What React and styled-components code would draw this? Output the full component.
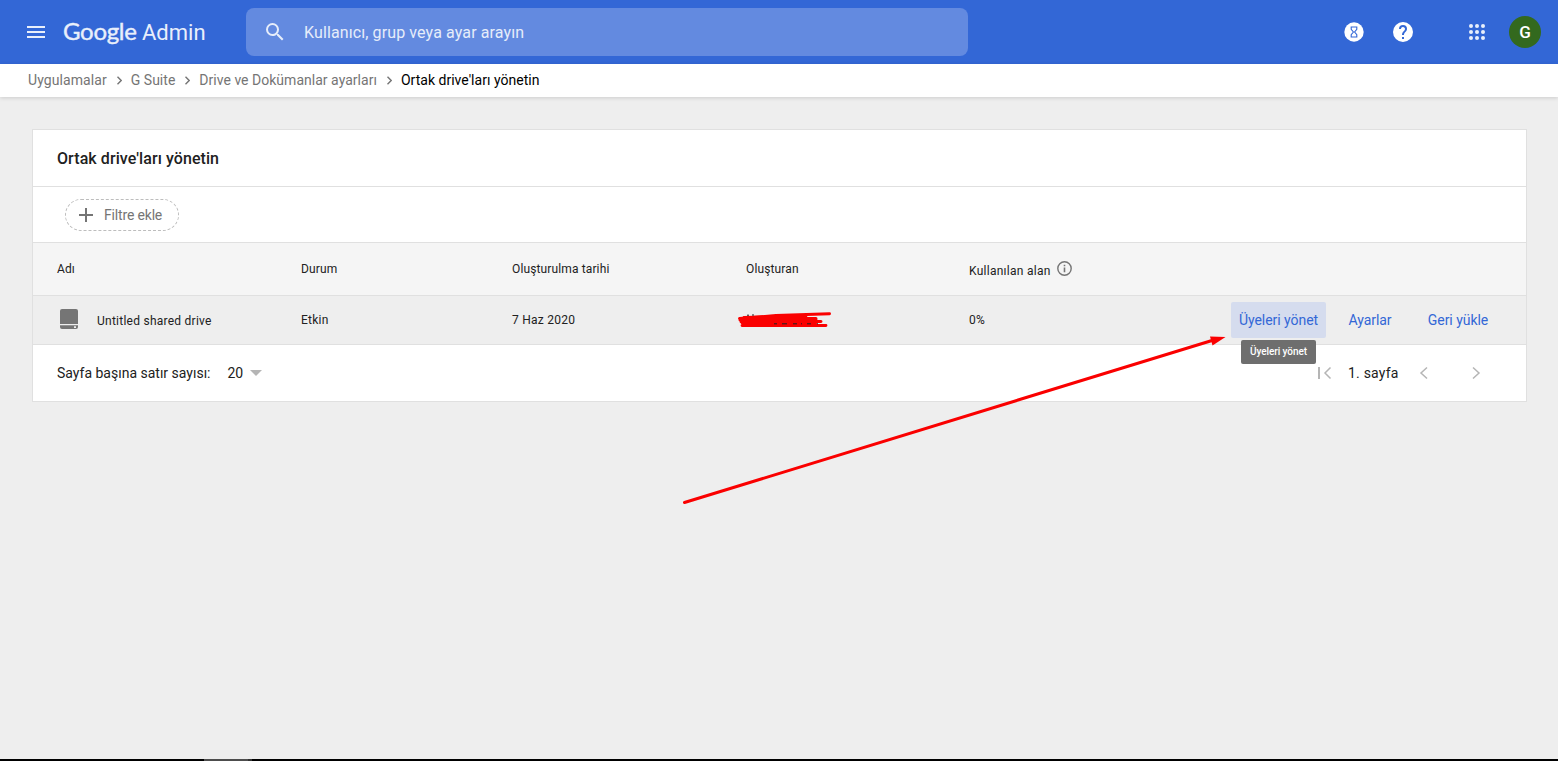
import React, { useState } from 'react';
import styled, { createGlobalStyle } from 'styled-components';

const GlobalStyle = createGlobalStyle`
    * {
        box-sizing: border-box;
    }

    body {
        margin: 0;
        background: #eee;
        font-family: Roboto, "Liberation Sans", sans-serif;
        color: #212121;
    }

    svg {
        display: block;
        flex-shrink: 0;
    }
`;

const Page = styled.div`
    position: relative;
    display: flex;
    flex-direction: column;
    height: 100vh;
    overflow: hidden;
`;

const Header = styled.header`
    display: flex;
    align-items: center;
    height: 64px;
    flex-shrink: 0;
    padding: 0 17px 0 24px;
    background: #3367d6;
    color: #fff;
`;

const Brand = styled.div`
    display: flex;
    align-items: baseline;
    width: 183px;
    margin: 0 0 0 15px;
    line-height: 32px;
    color: #e9effb;
    white-space: nowrap;

    .google {
        width: 79px;
        font-family: Lato, sans-serif;
        font-size: 24px;
        letter-spacing: -0.3px;
        -webkit-text-stroke: 0.4px #e9effb;
    }

    .admin {
        font-size: 22px;
        letter-spacing: 0;
    }
`;

const Search = styled.div`
    display: flex;
    align-items: center;
    gap: 17px;
    width: 722px;
    height: 48px;
    padding-left: 17px;
    border-radius: 8px;
    background: #638ae0;
    color: #e6edfa;
    font-size: 16px;
    letter-spacing: 0.11px;
`;

const HeaderActions = styled.div`
    display: flex;
    align-items: center;
    margin-left: auto;

    svg:nth-child(2) {
        margin: 0 54px 0 25px;
    }
`;

const Avatar = styled.div`
    display: flex;
    align-items: center;
    justify-content: center;
    width: 32px;
    height: 32px;
    margin-left: 24px;
    border-radius: 50%;
    background: #33691e;
    font-size: 17px;
    font-weight: 500;
`;

const Breadcrumbs = styled.nav`
    display: flex;
    align-items: center;
    height: 33px;
    flex-shrink: 0;
    padding: 0 0 1px 28px;
    background: #fff;
    box-shadow: 0 1px 4px rgba(0, 0, 0, 0.14);
    font-size: 14px;
    z-index: 1;

    svg {
        margin: 0 9px 0 10px;
    }
`;

const Crumb = styled.span`
    color: ${(p) => (p.$current ? '#000' : '#757575')};
    letter-spacing: 0.02px;
    white-space: nowrap;

    &:first-child {
        letter-spacing: 0.08px;
    }
`;

const Panel = styled.main`
    width: 1495px;
    margin: 32px 0 0 32px;
    border: 1px solid #e0e0e0;
    background: #fff;
`;

const Title = styled.h1`
    display: flex;
    align-items: center;
    height: 57px;
    margin: 0;
    padding: 0 24px;
    border-bottom: 1px solid #e0e0e0;
    font-size: 16px;
    font-weight: 500;
    letter-spacing: 0.08px;
`;

const FilterBar = styled.div`
    display: flex;
    align-items: center;
    height: 56px;
    padding-left: 32px;
    border-bottom: 1px solid #e0e0e0;
`;

const FilterChip = styled.button`
    display: flex;
    align-items: center;
    gap: 11px;
    width: 114px;
    height: 32px;
    padding: 0 0 0 13px;
    border: 1px dashed #bdbdbd;
    border-radius: 16px;
    background: none;
    color: #757575;
    font-family: inherit;
    font-size: 14px;
    letter-spacing: -0.17px;
    white-space: nowrap;
`;

const Row = styled.div`
    display: grid;
    grid-template-columns: 244px 211px 234px 223px 1fr auto;
    align-items: center;
    height: ${(p) => (p.$head ? '53px' : '49px')};
    padding: 0 30px 0 24px;
    border-bottom: 1px solid #e0e0e0;
    background: ${(p) => (p.$head ? '#f5f5f5' : '#eee')};
    font-size: 12px;
    letter-spacing: ${(p) => (p.$head ? '0.13px' : '0.25px')};
`;

const Cell = styled.div`
    display: flex;
    align-items: center;
    gap: ${(p) => p.$gap || '0'};
    line-height: 16px;

    span {
        padding-top: ${(p) => p.$drop || '0'};
    }
`;

const HintLabel = styled.span`
    width: 82px;
    letter-spacing: 0.27px;
    white-space: nowrap;
`;

const Actions = styled.div`
    display: flex;
`;

const ActionItem = styled.div`
    position: relative;
    margin-left: ${(p) => p.$before || '0'};
`;

const ActionButton = styled.button`
    width: ${(p) => p.$width};
    height: 36px;
    padding: 0;
    border: none;
    border-radius: 2px;
    background: ${(p) => (p.$active ? '#d5dcee' : 'transparent')};
    color: #3367d6;
    font-family: inherit;
    font-size: 14px;
    letter-spacing: -0.04px;
    white-space: nowrap;
`;

const Tooltip = styled.div`
    position: absolute;
    top: 38px;
    left: 10px;
    width: 75px;
    height: 24px;
    border-radius: 2px;
    background: #6e6e6e;
    color: #fff;
    font-size: 10px;
    font-weight: 500;
    letter-spacing: -0.07px;
    line-height: 24px;
    text-align: center;
    z-index: 2;
`;

const Footer = styled.div`
    display: flex;
    align-items: center;
    height: 56px;
    padding: 0 42px 0 24px;
    font-size: 14px;
`;

const PageSize = styled.div`
    display: flex;
    align-items: center;
    gap: 7px;
    margin-left: 17px;
`;

const Pager = styled.div`
    display: flex;
    align-items: center;
    margin-left: auto;

    .label {
        width: 50px;
        margin: 0 18px 0 16px;
        letter-spacing: 0.2px;
        white-space: nowrap;
    }

    .prev {
        margin-right: 36px;
    }
`;

const Scribble = styled.svg`
    margin-left: -10px;
`;

const Arrow = styled.svg`
    position: absolute;
    top: 330px;
    left: 680px;
    z-index: 3;
`;

const BottomEdge = styled.div`
    display: flex;
    height: 2px;
    margin-top: auto;
    padding-left: 204px;
    background: #000;

    i {
        width: 44px;
        background: #4d4d4d;
    }

    i + i {
        width: 4px;
        background: #333;
    }
`;

const Chevron = ({ left, className }) => (
    <svg className={className} width="16" height="16" viewBox="0 0 16 16" fill="none" stroke="#b5b5b5" strokeWidth="1.5">
        <path d={left ? 'M11 2.5 5 8l6 5.5' : 'M5 2.5 11 8l-6 5.5'} />
    </svg>
);

const CrumbArrow = () => (
    <svg width="5" height="9" viewBox="0 0 5 9" fill="none" stroke="#757575" strokeWidth="1.4">
        <path d="M.5 .8 4.2 4.5.5 8.2" />
    </svg>
);

const crumbs = [
    { text: 'Uygulamalar' },
    { text: 'G Suite' },
    { text: 'Drive ve Dokümanlar ayarları' },
    { text: "Ortak drive'ları yönetin", current: true },
];

const actions = [
    { id: 'members', text: 'Üyeleri yönet', width: '95px', before: '0' },
    { id: 'settings', text: 'Ayarlar', width: '64px', before: '12px' },
    { id: 'restore', text: 'Geri yükle', width: '76px', before: '18px' },
];

function App() {
    const [hovered, setHovered] = useState('members');

    return (
        <Page>
            <GlobalStyle />
            <Header>
                <svg width="24" height="24" viewBox="0 0 24 24" fill="#e9effb">
                    <path d="M3 6h18v2H3zM3 11h18v2H3zM3 16h18v2H3z" />
                </svg>
                <Brand>
                    <span className="google">Google</span>
                    <span className="admin">Admin</span>
                </Brand>
                <Search>
                    <svg width="24" height="24" viewBox="0 0 24 24" fill="#e6edfa">
                        <path d="M15.5 14h-.79l-.28-.27A6.47 6.47 0 0 0 16 9.5 6.5 6.5 0 1 0 9.5 16c1.61 0 3.09-.59 4.23-1.57l.27.28v.79l5 4.99L20.49 19l-4.99-5zm-6 0a4.5 4.5 0 1 1 0-9 4.5 4.5 0 0 1 0 9z" />
                    </svg>
                    <span>Kullanıcı, grup veya ayar arayın</span>
                </Search>
                <HeaderActions>
                    <svg width="24" height="24" viewBox="0 0 24 24">
                        <circle cx="12" cy="12" r="9.7" fill="#fff" />
                        <path d="M9.2 7h5.6v2.4L12.6 12l2.2 2.6V17H9.2v-2.4l2.2-2.6-2.2-2.6z" fill="none" stroke="#3367d6" strokeWidth="1.1" />
                    </svg>
                    <svg width="24" height="24" viewBox="0 0 24 24" fill="#fff">
                        <path d="M12 2a10 10 0 1 0 0 20 10 10 0 0 0 0-20zm1 17h-2v-2h2v2zm2.07-7.75-.9.92C13.45 12.9 13 13.5 13 15h-2v-.5c0-1.1.45-2.1 1.17-2.83l1.24-1.26A2 2 0 1 0 10 9H8a4 4 0 1 1 8 0c0 .88-.36 1.68-.93 2.25z" />
                    </svg>
                    <svg width="16" height="16" viewBox="0 0 16 16" fill="#e9effb">
                        {[2, 8, 14].map((y) => [2, 8, 14].map((x) => <circle key={`${x}-${y}`} cx={x} cy={y} r="2" />))}
                    </svg>
                    <Avatar>G</Avatar>
                </HeaderActions>
            </Header>

            <Breadcrumbs>
                {crumbs.map((crumb, i) => (
                    <React.Fragment key={crumb.text}>
                        {i > 0 && <CrumbArrow />}
                        <Crumb $current={crumb.current}>{crumb.text}</Crumb>
                    </React.Fragment>
                ))}
            </Breadcrumbs>

            <Panel>
                <Title>Ortak drive'ları yönetin</Title>
                <FilterBar>
                    <FilterChip>
                        <svg width="14" height="14" viewBox="0 0 14 14" fill="#757575">
                            <path d="M6 0h2v6h6v2H8v6H6V8H0V6h6z" />
                        </svg>
                        Filtre ekle
                    </FilterChip>
                </FilterBar>

                <Row $head>
                    <Cell>Adı</Cell>
                    <Cell>Durum</Cell>
                    <Cell>Oluşturulma tarihi</Cell>
                    <Cell>Oluşturan</Cell>
                    <Cell $gap="6px" $drop="3px">
                        <HintLabel>Kullanılan alan</HintLabel>
                        <svg width="15" height="16" viewBox="0 0 15 16">
                            <circle cx="7.5" cy="7.5" r="6.7" fill="none" stroke="#757575" strokeWidth="1.4" />
                            <path d="M6.7 3.8h1.6v1.5H6.7zM6.7 6.6h1.6v4.6H6.7z" fill="#757575" />
                        </svg>
                    </Cell>
                </Row>

                <Row>
                    <Cell $gap="19px" $drop="2px">
                        <svg width="21" height="22" viewBox="0 0 21 22" fill="#757575">
                            <path d="M5 0h14a2 2 0 0 1 2 2v13H3V2a2 2 0 0 1 2-2z" />
                            <path fillRule="evenodd" d="M3 16.3h18V18a2 2 0 0 1-2 2H5a2 2 0 0 1-2-2zM17 17.2v1.8h2v-1.8z" />
                        </svg>
                        <span>Untitled shared drive</span>
                    </Cell>
                    <Cell>Etkin</Cell>
                    <Cell>7 Haz 2020</Cell>
                    <Cell>
                        <Scribble width="96" height="18" viewBox="0 0 96 18" fill="none" stroke="#fa0000" strokeWidth="3" strokeLinecap="round" strokeLinejoin="round">
                            <path d="M93.5 2.8 40 4.5 3.5 7.5H80L4 9l81 1.5L5 10.8l75-2" />
                            <path d="M8 6.5 70 5M6 11.8h74M6 14.5h84" strokeWidth="2.8" />
                            <path d="M11 4.2h2M16 4h2M38 12.8h3M46 12.8h5M57 12.8h4M65 12.8h1M71 12.8h4M81 12.8h1" stroke="#212121" strokeWidth="1" strokeLinecap="butt" />
                        </Scribble>
                    </Cell>
                    <Cell>0%</Cell>
                    <Actions>
                        {actions.map((item) => (
                            <ActionItem key={item.id} $before={item.before}>
                                <ActionButton
                                    $width={item.width}
                                    $active={hovered === item.id}
                                    onMouseEnter={() => setHovered(item.id)}
                                >
                                    {item.text}
                                </ActionButton>
                                {hovered === item.id && <Tooltip>{item.text}</Tooltip>}
                            </ActionItem>
                        ))}
                    </Actions>
                </Row>

                <Footer>
                    <span>Sayfa başına satır sayısı:</span>
                    <PageSize>
                        20
                        <svg width="12" height="6" viewBox="0 0 12 6" fill="#b5b5b5">
                            <path d="M0 0h12L6 6z" />
                        </svg>
                    </PageSize>
                    <Pager>
                        <svg width="15" height="16" viewBox="0 0 15 16" fill="none" stroke="#b5b5b5" strokeWidth="1.5">
                            <path d="M2 2v12" strokeWidth="2" />
                            <path d="M13.5 2.5 8 8l5.5 5.5" />
                        </svg>
                        <span className="label">1. sayfa</span>
                        <Chevron left className="prev" />
                        <Chevron />
                    </Pager>
                </Footer>
            </Panel>

            <Arrow width="550" height="180" viewBox="680 330 550 180">
                <path d="M684.5 502.5 1212 340.5" stroke="#fa0000" strokeWidth="3" strokeLinecap="round" />
                <path d="M1210 336.5 1225.5 337 1212.5 345.5z" fill="#fa0000" />
            </Arrow>

            <BottomEdge>
                <i />
                <i />
            </BottomEdge>
        </Page>
    );
}

export default App;
